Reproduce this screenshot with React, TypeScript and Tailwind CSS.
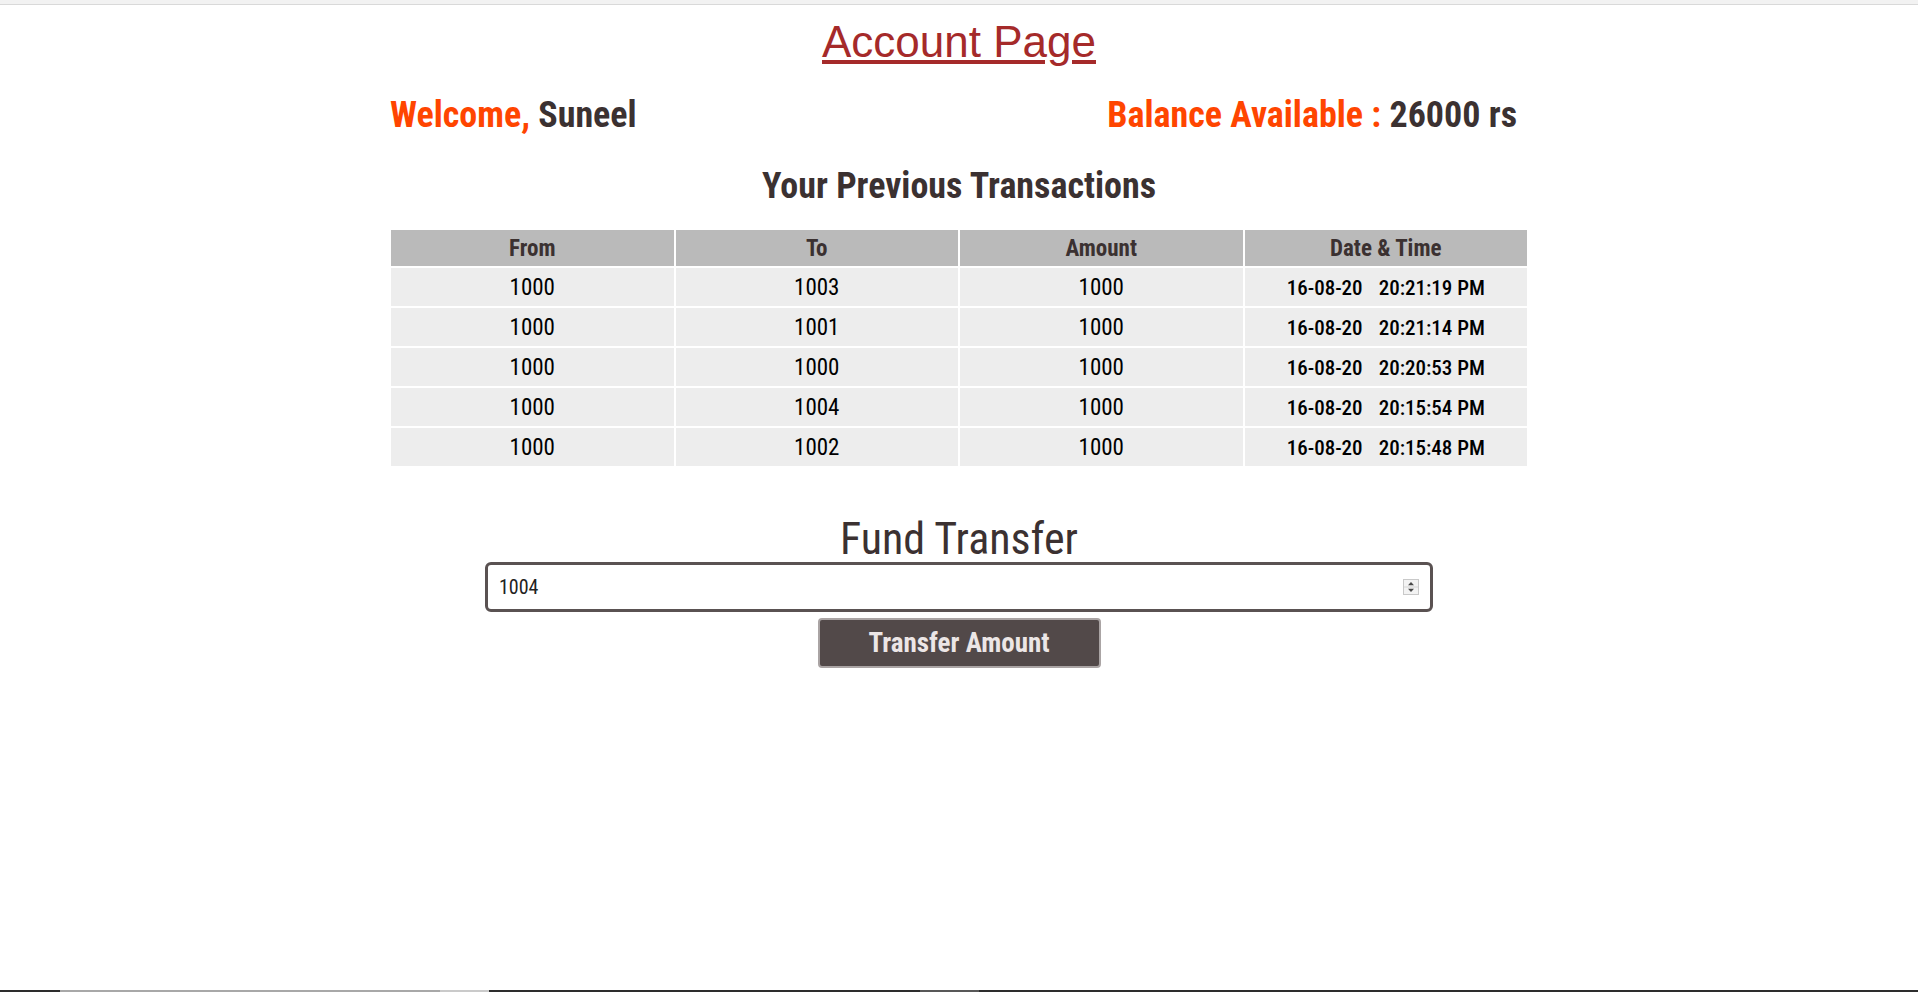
import React from 'react';

interface Transaction {
  from: string;
  to: string;
  amount: string;
  date: string;
  time: string;
}

const transactions: Transaction[] = [
  { from: '1000', to: '1003', amount: '1000', date: '16-08-20', time: '20:21:19 PM' },
  { from: '1000', to: '1001', amount: '1000', date: '16-08-20', time: '20:21:14 PM' },
  { from: '1000', to: '1000', amount: '1000', date: '16-08-20', time: '20:20:53 PM' },
  { from: '1000', to: '1004', amount: '1000', date: '16-08-20', time: '20:15:54 PM' },
  { from: '1000', to: '1002', amount: '1000', date: '16-08-20', time: '20:15:48 PM' },
];

const Spinner: React.FC = () => (
  <svg width="16" height="16" viewBox="0 0 16 16" className="absolute right-[14px] top-[17px]">
    <rect x="0.5" y="0.5" width="15" height="15" fill="#f3f3f3" stroke="#c9c9c9" />
    <line x1="1" y1="8" x2="15" y2="8" stroke="#d5d5d5" />
    <path d="M5 6.2 L8 3 L11 6.2 Z" fill="#4a4a4a" />
    <path d="M5 9.8 L8 13 L11 9.8 Z" fill="#4a4a4a" />
  </svg>
);

const App: React.FC = () => {
  return (
    <div className="h-[992px] flex flex-col bg-white overflow-hidden">
      {/* browser strip */}
      <div className="h-[5px] bg-[#f2f2f2] border-b border-[#d9d9d9] shrink-0" />

      <main className="flex-1">
        <h1 className="mt-[15px] text-center text-[44px] leading-none font-normal font-['Liberation_Sans',Arial,sans-serif] text-[#a52a2a] underline">
          Account Page
        </h1>

        {/* narrow sans everywhere below the title */}
        <div className="w-[1140px] mx-auto font-['Roboto',sans-serif] font-stretch-condensed">
          <div className="mt-[33px] flex justify-between pl-[1px] pr-[12px] text-[36px] leading-none font-bold">
            <p>
              <span className="text-[#ff4500]">Welcome, </span>
              <span className="text-[#3b3131]">Suneel</span>
            </p>
            <p>
              <span className="text-[#ff4500]">Balance Available : </span>
              <span className="text-[#3b3131]">26000 rs</span>
            </p>
          </div>

          <h2 className="mt-[35px] text-center text-[36px] leading-none font-bold text-[#3b3131]">
            Your Previous Transactions
          </h2>

          {/* transactions */}
          <table className="mt-[24px] w-full table-fixed border-separate border-spacing-[2px]">
            <thead>
              <tr className="h-[36px] bg-[#bababa] text-[#3b3131] text-[23px] font-bold leading-[26px]">
                <th className="pt-[2px]">From</th>
                <th className="pt-[2px]">To</th>
                <th className="pt-[2px]">Amount</th>
                <th className="pt-[2px]">Date &amp; Time</th>
              </tr>
            </thead>
            <tbody>
              {transactions.map((t, i) => (
                <tr key={i} className="h-[38px] bg-[#ededed] text-black text-[23px] leading-[26px] text-center">
                  <td className="pt-[2px]">{t.from}</td>
                  <td className="pt-[2px]">{t.to}</td>
                  <td className="pt-[2px]">{t.amount}</td>
                  <td className="pt-[2px] font-stretch-semi-condensed font-medium text-[21px]">
                    {t.date}
                    <span className="ml-[16px]">{t.time}</span>
                  </td>
                </tr>
              ))}
            </tbody>
          </table>

          <h2 className="mt-[49px] text-center text-[44px] leading-none font-normal text-[#3b3131]">
            Fund Transfer
          </h2>

          <div className="relative mt-[1px] mx-auto w-[948px]">
            <input
              type="text"
              readOnly
              value="1004"
              className="w-full h-[50px] border-[3px] border-[#5a5252] rounded-[6px] pl-[11px] text-[20px] text-[#222] outline-none bg-white"
            />
            <Spinner />
          </div>

          <div className="flex justify-center mt-[6px]">
            <button className="w-[283px] h-[50px] bg-[#524949] border-2 border-[#aaa4a4] rounded-[4px] text-[#ece6e6] text-[27px] font-bold leading-none">
              Transfer Amount
            </button>
          </div>
        </div>
      </main>

      {/* taskbar edge */}
      <div className="h-[2px] flex shrink-0">
        <div className="w-[60px] bg-[#2d2d2d]" />
        <div className="w-[380px] bg-[#a8a8a8]" />
        <div className="w-[49px] bg-[#cacaca]" />
        <div className="w-[431px] bg-[#2d2d2d]" />
        <div className="w-[59px] bg-[#585858]" />
        <div className="flex-1 bg-[#2d2d2d]" />
      </div>
    </div>
  );
};

export default App;
